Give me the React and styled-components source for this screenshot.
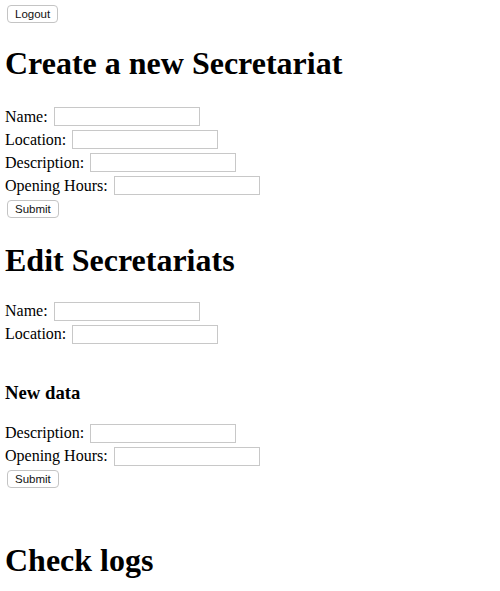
import React from "react";
import styled, { createGlobalStyle } from "styled-components";

const Global = createGlobalStyle`
  html, body { margin: 0; padding: 0; background: #fff; }
  body { font-family: "Liberation Serif", "Times New Roman", serif; font-size: 16px; color: #000; }
`;

const Page = styled.div`
  padding: 5px 5px 0 5px;
`;

const TopBar = styled.div`
  display: flex;
  height: 18px;
`;

const Button = styled.button`
  box-sizing: border-box;
  height: 18px;
  margin: 0 2px;
  padding: 0 7px;
  background: #fff;
  border: 1px solid #c4c4c4;
  border-radius: 4px;
  font-family: "Liberation Sans", Arial, sans-serif;
  font-size: 11.5px;
  color: #111;
  line-height: 16px;
`;

const Title = styled.h1`
  font-size: 32px;
  font-weight: bold;
  line-height: 37px;
  margin: ${(p) => p.$top}px 0 ${(p) => p.$bottom}px 0;
`;

const SubTitle = styled.h3`
  font-size: 18.72px;
  font-weight: bold;
  line-height: 21.5px;
  margin: ${(p) => p.$top}px 0 18.5px 0;
`;

const Form = styled.form`
  display: flex;
  flex-direction: column;
  margin: 0;
`;

const Row = styled.label`
  display: flex;
  align-items: center;
  height: 23px;
  gap: 6px;
  line-height: 18px;
`;

const Input = styled.input`
  box-sizing: border-box;
  width: 146px;
  height: 19px;
  margin: 0;
  padding: 0 3px;
  border: 1px solid #c8c8c8;
  border-radius: 0;
  background: #fff;
  font-size: 13px;
`;

const ButtonRow = styled.div`
  display: flex;
  align-items: center;
  height: 23px;
`;

function Field({ label }) {
  return (
    <Row>
      <span>{label}</span>
      <Input type="text" />
    </Row>
  );
}

export default function App() {
  return (
    <>
      <Global />
      <Page>
        <TopBar>
          <Button type="button">Logout</Button>
        </TopBar>
        <Title $top={22} $bottom={23}>Create a new Secretariat</Title>
        <Form onSubmit={(e) => e.preventDefault()}>
          <Field label="Name:" />
          <Field label="Location:" />
          <Field label="Description:" />
          <Field label="Opening Hours:" />
          <ButtonRow>
            <Button type="submit">Submit</Button>
          </ButtonRow>
        </Form>
        <Title $top={21.5} $bottom={21}>Edit Secretariats</Title>
        <Form onSubmit={(e) => e.preventDefault()}>
          <Field label="Name:" />
          <Field label="Location:" />
          <SubTitle $top={36}>New data</SubTitle>
          <Field label="Description:" />
          <Field label="Opening Hours:" />
          <ButtonRow>
            <Button type="submit">Submit</Button>
          </ButtonRow>
        </Form>
        <Title $top={51} $bottom={21}>Check logs</Title>
      </Page>
    </>
  );
}
